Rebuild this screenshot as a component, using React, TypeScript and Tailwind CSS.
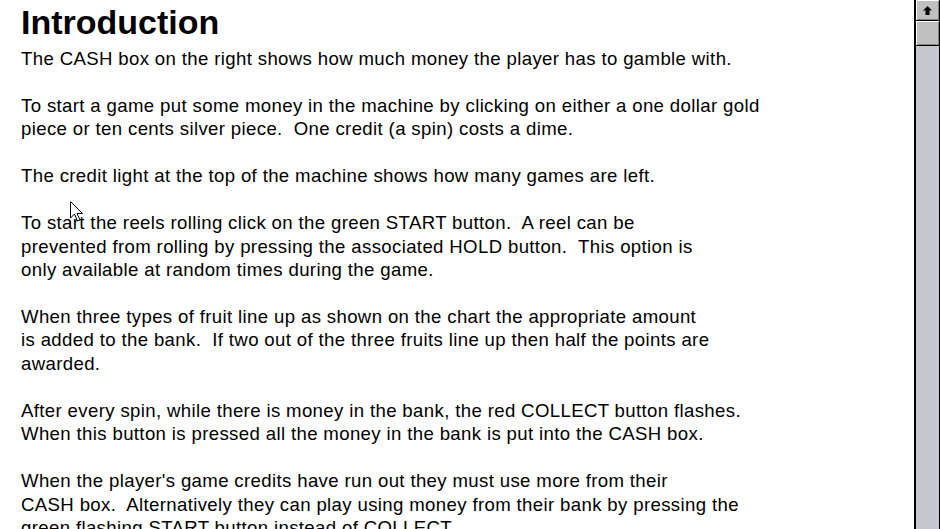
import React from "react";

const paragraphs: string[][] = [
  ["The CASH box on the right shows how much money the player has to gamble with."],
  [
    "To start a game put some money in the machine by clicking on either a one dollar gold",
    "piece or ten cents silver piece.  One credit (a spin) costs a dime.",
  ],
  ["The credit light at the top of the machine shows how many games are left."],
  [
    "To start the reels rolling click on the green START button.  A reel can be",
    "prevented from rolling by pressing the associated HOLD button.  This option is",
    "only available at random times during the game.",
  ],
  [
    "When three types of fruit line up as shown on the chart the appropriate amount",
    "is added to the bank.  If two out of the three fruits line up then half the points are",
    "awarded.",
  ],
  [
    "After every spin, while there is money in the bank, the red COLLECT button flashes.",
    "When this button is pressed all the money in the bank is put into the CASH box.",
  ],
  [
    "When the player's game credits have run out they must use more from their",
    "CASH box.  Alternatively they can play using money from their bank by pressing the",
    "green flashing START button instead of COLLECT.",
  ],
];

const Cursor = () => (
  <svg
    className="absolute left-[70px] top-[201px]"
    width="14"
    height="22"
    viewBox="0 0 14 22"
  >
    <path
      d="M0.5 0.5 L0.5 17 L4.5 13 L7.5 20 L10 19 L7 12.5 L12.5 12.5 Z"
      fill="white"
      stroke="black"
      strokeWidth="1"
    />
  </svg>
);

export default function App() {
  return (
    <div className="flex h-[529px] w-[940px] overflow-hidden bg-white">
      {/* HELP TEXT */}
      <div className="relative flex-1 overflow-hidden pl-[21px] font-['Liberation_Sans',Arial,sans-serif] text-black">
        <h1 className="mt-[2px] text-[34px] font-bold leading-[40px]">Introduction</h1>
        <div className="mt-[5px] text-[18.6px] leading-[23.45px] tracking-[0.36px]">
          {paragraphs.map((lines, i) => (
            <div key={i} className="mb-[23.45px]">
              {lines.map((line, j) => (
                <div key={j} className="whitespace-pre">
                  {line}
                </div>
              ))}
            </div>
          ))}
        </div>
        <Cursor />
      </div>

      {/* SCROLLBAR */}
      <div className="flex w-[26px] flex-col border-l-2 border-r border-black bg-[#c4c8cc]">
        <div className="flex h-[21px] items-center justify-center border-b border-black bg-[#c0c0c0] shadow-[inset_1px_1px_0_#ffffff,inset_-1px_-1px_0_#808080]">
          <svg width="11" height="11" viewBox="0 0 11 11">
            <path d="M5.5 1 L10 5.5 L7.5 5.5 L7.5 10 L3.5 10 L3.5 5.5 L1 5.5 Z" fill="black" />
          </svg>
        </div>
        <div className="h-[25px] border-b border-black bg-[#c0c0c0] shadow-[inset_1px_1px_0_#ffffff,inset_-1px_-1px_0_#808080]" />
        <div className="flex-1" />
      </div>
    </div>
  );
}
